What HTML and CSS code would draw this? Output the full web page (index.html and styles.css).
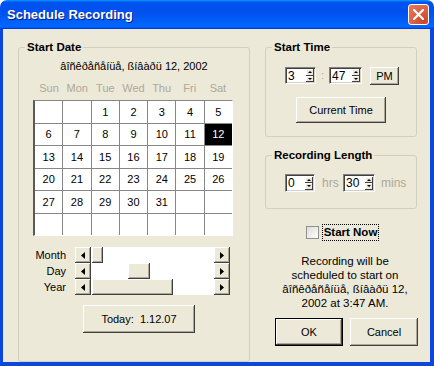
FILE: index.html
```html
<!DOCTYPE html>
<html lang="en">
<head>
    <meta charset="UTF-8">
    <meta name="viewport" content="width=device-width, initial-scale=1.0">
    <title>Schedule Recording</title>
    <link rel="stylesheet" href="styles.css">
</head>
<body>
    <div class="window">
        <div class="titlebar">
            <span class="title">Schedule Recording</span>
            <button class="close-btn" title="Close">
                <svg width="11" height="11" viewBox="0 0 11 11"><path d="M1 1 L10 10 M10 1 L1 10" stroke="#fff" stroke-width="2.2" stroke-linecap="square"/></svg>
            </button>
        </div>

        <div class="client">
            <!-- left side: date picker -->
            <fieldset class="group date-group">
                <legend>Start Date</legend>
                <div class="long-date">âîñêðåñåíüå, ßíâàðü 12, 2002</div>

                <div class="weekdays">
                    <span>Sun</span><span>Mon</span><span>Tue</span><span>Wed</span><span>Thu</span><span>Fri</span><span>Sat</span>
                </div>

                <div class="calendar">
                    <span></span><span></span><span>1</span><span>2</span><span>3</span><span>4</span><span>5</span>
                    <span>6</span><span>7</span><span>8</span><span>9</span><span>10</span><span>11</span><span class="selected">12</span>
                    <span>13</span><span>14</span><span>15</span><span>16</span><span>17</span><span>18</span><span>19</span>
                    <span>20</span><span>21</span><span>22</span><span>23</span><span>24</span><span>25</span><span>26</span>
                    <span>27</span><span>28</span><span>29</span><span>30</span><span>31</span><span></span><span></span>
                    <span></span><span></span><span></span><span></span><span></span><span></span><span></span>
                </div>

                <div class="sliders">
                    <div class="slider-row">
                        <label>Month</label>
                        <div class="scrollbar">
                            <span class="arrow"><svg width="4" height="7"><polygon points="4,0 0,3.5 4,7"/></svg></span>
                            <div class="track"><span class="thumb" style="margin-left: 1px; width: 11px"></span></div>
                            <span class="arrow"><svg width="4" height="7"><polygon points="0,0 4,3.5 0,7"/></svg></span>
                        </div>
                    </div>
                    <div class="slider-row">
                        <label>Day</label>
                        <div class="scrollbar">
                            <span class="arrow"><svg width="4" height="7"><polygon points="4,0 0,3.5 4,7"/></svg></span>
                            <div class="track"><span class="thumb" style="margin-left: 37px; width: 22px"></span></div>
                            <span class="arrow"><svg width="4" height="7"><polygon points="0,0 4,3.5 0,7"/></svg></span>
                        </div>
                    </div>
                    <div class="slider-row">
                        <label>Year</label>
                        <div class="scrollbar">
                            <span class="arrow"><svg width="4" height="7"><polygon points="4,0 0,3.5 4,7"/></svg></span>
                            <div class="track"><span class="thumb" style="margin-left: 1px; width: 81px"></span></div>
                            <span class="arrow"><svg width="4" height="7"><polygon points="0,0 4,3.5 0,7"/></svg></span>
                        </div>
                    </div>
                </div>

                <button class="btn today-btn">Today:&nbsp; 1.12.07</button>
            </fieldset>

            <!-- right side -->
            <div class="right-col">
                <fieldset class="group time-group">
                    <legend>Start Time</legend>
                    <div class="spin-row">
                        <div class="spin hour-spin">
                            <span class="spin-value">3</span>
                            <span class="spin-btns"><span class="spin-up"></span><span class="spin-down"></span></span>
                        </div>
                        <span class="colon">:</span>
                        <div class="spin min-spin">
                            <span class="spin-value">47</span>
                            <span class="spin-btns"><span class="spin-up"></span><span class="spin-down"></span></span>
                        </div>
                        <button class="btn pm-btn">PM</button>
                    </div>
                    <button class="btn current-btn">Current Time</button>
                </fieldset>

                <fieldset class="group length-group">
                    <legend>Recording Length</legend>
                    <div class="spin-row">
                        <div class="spin hrs-spin">
                            <span class="spin-value">0</span>
                            <span class="spin-btns"><span class="spin-up"></span><span class="spin-down"></span></span>
                        </div>
                        <span class="unit hrs">hrs</span>
                        <div class="spin mins-spin">
                            <span class="spin-value">30</span>
                            <span class="spin-btns"><span class="spin-up"></span><span class="spin-down"></span></span>
                        </div>
                        <span class="unit mins">mins</span>
                    </div>
                </fieldset>

                <div class="check-row">
                    <span class="checkbox"></span>
                    <span class="check-label">Start Now</span>
                </div>

                <p class="summary">Recording will be<br>scheduled to start on<br>âîñêðåñåíüå, ßíâàðü 12,<br>2002 at 3:47 AM.</p>

                <div class="dialog-buttons">
                    <button class="btn btn-default">OK</button>
                    <button class="btn">Cancel</button>
                </div>
            </div>
        </div>
    </div>
</body>
</html>
```

FILE: styles.css
```css
* {
    box-sizing: border-box;
}
body {
    margin: 0;
    background: #fff;
    font-family: "Liberation Sans", Arial, sans-serif;
    font-size: 11px;
    color: #000;
}
.window {
    width: 434px;
    height: 366px;
    display: flex;
    flex-direction: column;
}
.titlebar {
    height: 29px;
    flex: none;
    display: flex;
    align-items: center;
    justify-content: space-between;
    padding: 0 5px 0 7px;
    border-radius: 7px 7px 0 0;
    background: linear-gradient(to bottom, #0997ff 0%, #0053ee 8%, #0050ee 40%, #0066ff 88%, #0066ff 93%, #005bff 95%, #003dd7 96%, #003dd7 100%);
}
.title {
    color: #fff;
    font-weight: bold;
    font-size: 13px;
    text-shadow: 1px 1px #0a1883;
}
.close-btn {
    width: 21px;
    height: 21px;
    padding: 0;
    border: 1px solid #fff;
    border-radius: 3px;
    background: radial-gradient(circle at 80% 85%, #cc4625 0%, #dc6041 50%, #e57c5e 100%);
    display: flex;
    align-items: center;
    justify-content: center;
}
.client {
    flex: 1;
    display: flex;
    gap: 15px;
    padding: 12px 0 0 15px;
    background: #ece9d8;
    border-style: solid;
    border-color: #0b47dd;
    border-width: 0 4px 4px 3px;
}

/* group boxes */
.group {
    margin: 0;
    padding: 0;
    min-width: 0;
    border: 1px solid #d0d0bf;
    border-radius: 3px;
}
.group legend {
    margin-left: 6px;
    padding: 0 2px;
    font-weight: bold;
    font-size: 11.5px;
    line-height: 13px;
}

/* start date */
.date-group {
    width: 232px;
    padding-bottom: 12px;
}
.long-date {
    margin-top: 6px;
    line-height: 13px;
    text-align: center;
}
.weekdays {
    display: grid;
    grid-template-columns: repeat(7, 1fr);
    margin: 9px 16px 0 14px;
    padding: 0 1px 0 2px;
    line-height: 13px;
    color: #aca899;
    text-align: center;
}
.calendar {
    display: grid;
    grid-template-columns: repeat(7, 1fr);
    grid-template-rows: repeat(6, 1fr);
    gap: 1px;
    height: 136px;
    margin: 5px 16px 0 14px;
    background: #868686;
    border-style: solid;
    border-width: 1px 1px 1px 2px;
    border-color: #868686 #fff #fff #5a5a5a;
}
.calendar span {
    background: #fff;
    display: flex;
    align-items: center;
    justify-content: center;
}
.calendar .selected {
    background: #000;
    color: #fff;
}
.sliders {
    margin-top: 11px;
}
.slider-row {
    display: flex;
    align-items: center;
    height: 16px;
}
.slider-row label {
    width: 47px;
    margin-right: 9px;
    text-align: right;
}
.scrollbar {
    width: 155px;
    height: 16px;
    display: flex;
}
.arrow {
    width: 16px;
    height: 16px;
    display: flex;
    align-items: center;
    justify-content: center;
    background: #ece9d8;
    box-shadow: inset -1px -1px #404040, inset 1px 1px #fff, inset -2px -2px #aca899;
}
.track {
    flex: 1;
    display: flex;
    background: #fff;
}
.thumb {
    height: 16px;
    background: #ece9d8;
    box-shadow: inset -1px -1px #404040, inset 1px 1px #fff, inset -2px -2px #aca899;
}
.btn {
    font-family: "Liberation Sans", Arial, sans-serif;
    font-size: 11px;
    font-weight: normal;
    color: #000;
    background: #ece9d8;
    border: none;
    padding: 0;
    box-shadow: inset -1px -1px #404040, inset 1px 1px #fff, inset -2px -2px #aca899;
}
.today-btn {
    display: block;
    width: 112px;
    height: 28px;
    margin: 10px 0 0 64px;
}

/* right column */
.right-col {
    width: 153px;
    display: flex;
    flex-direction: column;
}
.time-group,
.length-group {
    width: 152px;
}
.time-group {
    padding: 13px 0 13px;
}
.length-group {
    margin-top: 12px;
    padding: 12px 0 16px;
}
.spin-row {
    display: flex;
    align-items: flex-start;
    padding-left: 19px;
}
.spin {
    height: 17px;
    display: flex;
    align-items: center;
    background: #fff;
    border: 1px solid;
    border-color: #808080 #fff #fff #808080;
    box-shadow: inset 1px 1px #404040, inset -1px -1px #d4d0c8;
}
.length-group .spin {
    height: 18px;
}
.hour-spin { width: 31px; }
.min-spin { width: 33px; }
.hrs-spin { width: 30px; }
.mins-spin { width: 32px; }
.spin-value {
    padding-left: 2px;
    font-size: 12px;
}
.spin-btns {
    margin-left: auto;
    margin-right: 1px;
    width: 8px;
    height: 13px;
    display: flex;
    flex-direction: column;
}
.spin-up,
.spin-down {
    flex: 1;
    display: flex;
    align-items: center;
    justify-content: center;
    background: #ece9d8;
    box-shadow: inset -1px -1px #404040, inset 1px 1px #fff;
}
.spin-up::after {
    content: "";
    border-left: 2px solid transparent;
    border-right: 2px solid transparent;
    border-bottom: 2px solid #000;
}
.spin-down::after {
    content: "";
    border-left: 2px solid transparent;
    border-right: 2px solid transparent;
    border-top: 2px solid #000;
}
.colon {
    width: 13px;
    text-align: center;
    color: #aca899;
    line-height: 17px;
}
.pm-btn {
    width: 29px;
    height: 18px;
    margin-left: 8px;
}
.current-btn {
    display: block;
    width: 90px;
    height: 26px;
    margin: 12px 0 0 30px;
}
.unit {
    color: #aca899;
    line-height: 18px;
    font-size: 12px;
}
.hrs {
    width: 28px;
    padding-left: 7px;
}
.mins {
    padding-left: 6px;
}
.check-row {
    display: flex;
    align-items: center;
    justify-content: center;
    margin-top: 15px;
    padding-left: 1px;
    height: 16px;
}
.checkbox {
    width: 13px;
    height: 13px;
    border: 1px solid #8e8f8f;
    background: linear-gradient(135deg, #dcdcd7, #fff);
}
.check-label {
    margin-left: 4px;
    padding: 1px 1px;
    font-weight: bold;
    font-size: 11.5px;
    line-height: 13px;
    outline: 1px dotted #000;
}
.summary {
    margin: 14px 0 0;
    padding-left: 7px;
    text-align: center;
    line-height: 14px;
    font-size: 11.5px;
}
.dialog-buttons {
    display: flex;
    gap: 7px;
    margin-top: 8px;
    padding-left: 10px;
}
.dialog-buttons .btn {
    width: 68px;
    height: 28px;
}
.btn-default {
    border: 1px solid #000;
}
```
